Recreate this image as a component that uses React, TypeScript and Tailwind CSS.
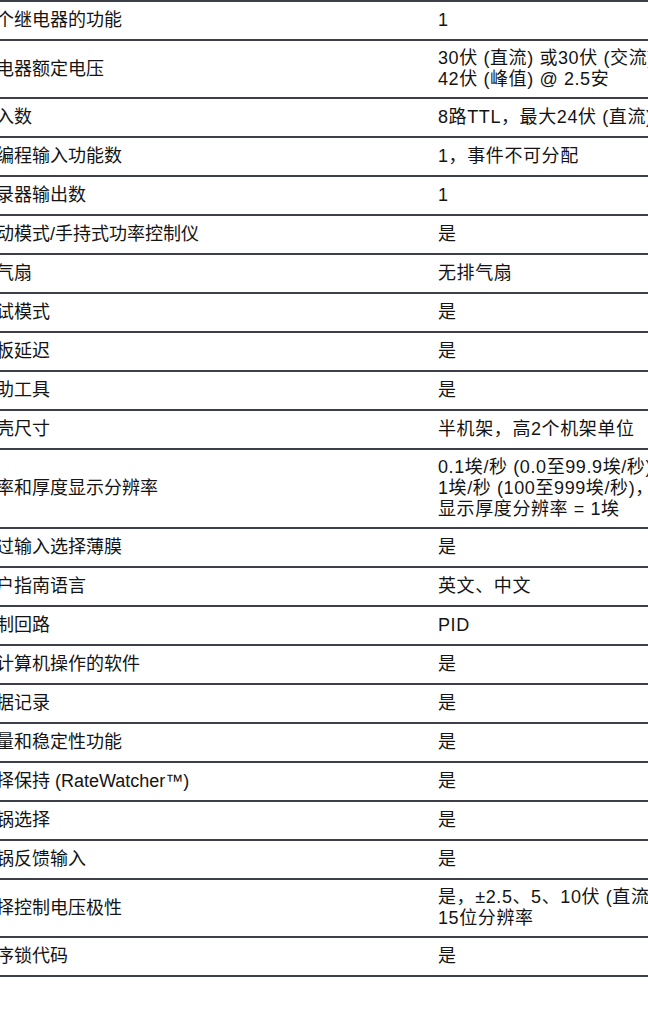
import React from "react";

const rows: { label: string; value: string[] }[] = [
  { label: "个继电器的功能", value: ["1"] },
  { label: "电器额定电压", value: ["30伏 (直流) 或30伏 (交流)，", "42伏 (峰值) @ 2.5安"] },
  { label: "入数", value: ["8路TTL，最大24伏 (直流)"] },
  { label: "编程输入功能数", value: ["1，事件不可分配"] },
  { label: "录器输出数", value: ["1"] },
  { label: "动模式/手持式功率控制仪", value: ["是"] },
  { label: "气扇", value: ["无排气扇"] },
  { label: "试模式", value: ["是"] },
  { label: "板延迟", value: ["是"] },
  { label: "助工具", value: ["是"] },
  { label: "壳尺寸", value: ["半机架，高2个机架单位"] },
  {
    label: "率和厚度显示分辨率",
    value: ["0.1埃/秒 (0.0至99.9埃/秒)，", "1埃/秒 (100至999埃/秒)，", "显示厚度分辨率 = 1埃"],
  },
  { label: "过输入选择薄膜", value: ["是"] },
  { label: "户指南语言", value: ["英文、中文"] },
  { label: "制回路", value: ["PID"] },
  { label: "计算机操作的软件", value: ["是"] },
  { label: "据记录", value: ["是"] },
  { label: "量和稳定性功能", value: ["是"] },
  { label: "择保持 (RateWatcher™)", value: ["是"] },
  { label: "锅选择", value: ["是"] },
  { label: "锅反馈输入", value: ["是"] },
  { label: "择控制电压极性", value: ["是，±2.5、5、10伏 (直流)，", "15位分辨率"] },
  { label: "序锁代码", value: ["是"] },
];

export default function App() {
  return (
    <div
      className="w-[648px] min-h-[1024px] bg-white overflow-hidden text-[18px] leading-[21px] text-[#141414]"
      style={{ fontFamily: '"Liberation Sans", "Noto Sans CJK SC", sans-serif' }}
    >
      {/* Spec table */}
      <div className="border-t-2 border-[#3d4048]">
        {rows.map((row, idx) => (
          <div
            key={idx}
            className="grid grid-cols-[438px_1fr] border-b-2 border-[#3d4048] min-h-[39px]"
          >
            <div className="flex items-center py-[7px] -ml-[4px] whitespace-nowrap">
              {row.label}
            </div>
            <div className="flex flex-col justify-center py-[7px] whitespace-nowrap overflow-hidden tracking-[0.6px]">
              {row.value.map((line, i) => (
                <span key={i}>{line}</span>
              ))}
            </div>
          </div>
        ))}
      </div>
    </div>
  );
}
